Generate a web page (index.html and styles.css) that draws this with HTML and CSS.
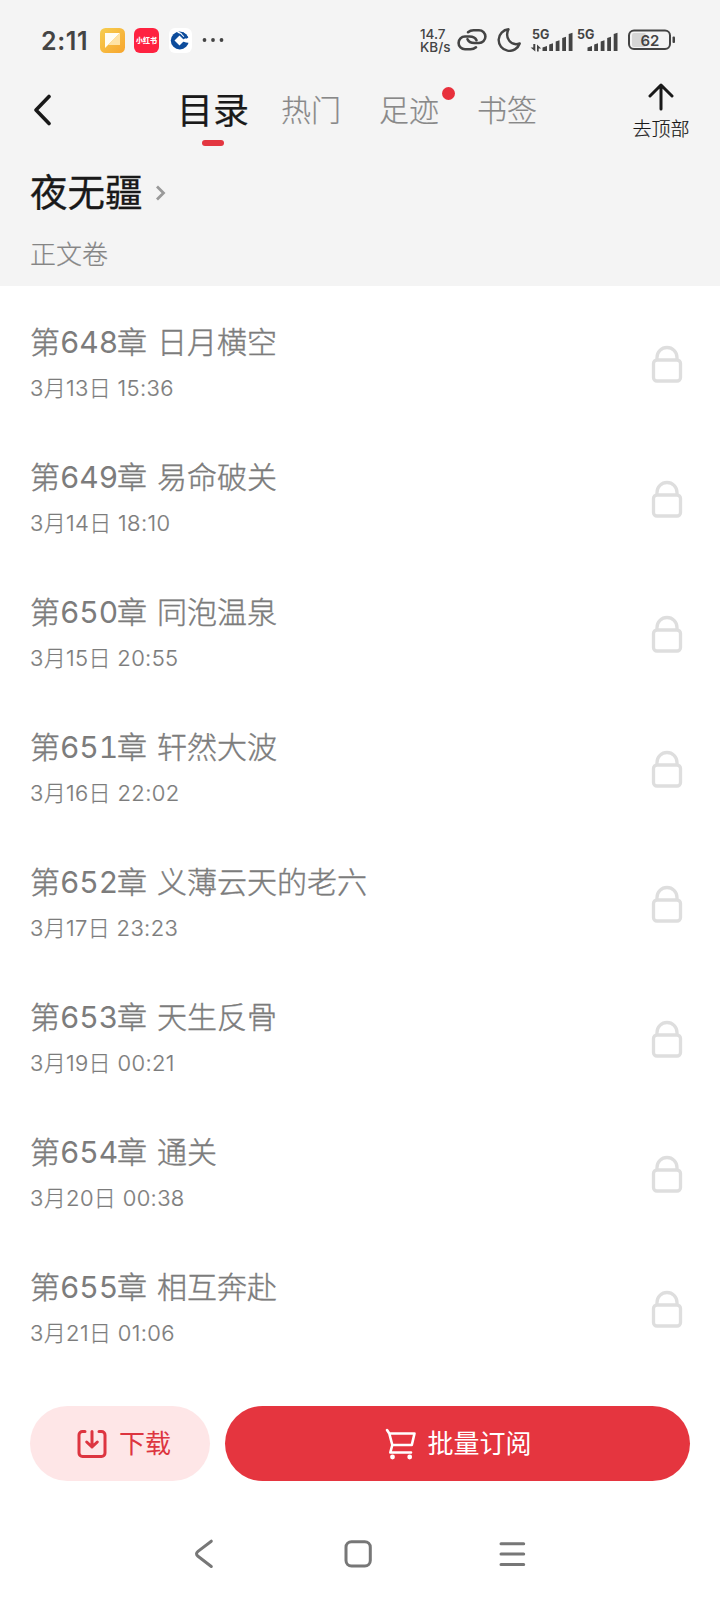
FILE: index.html
```html
<!DOCTYPE html>
<html lang="zh-CN">
<head>
<meta charset="utf-8">
<title>目录</title>
<link rel="stylesheet" href="styles.css">
</head>
<body>
<header class="top">
  <div class="status">
    <span class="clock">2:11</span>
    <svg class="app-icon" viewBox="0 0 25 25"><defs><linearGradient id="gold" x1="0" y1="0" x2="1" y2="1"><stop offset="0" stop-color="#f6ce50"/><stop offset="1" stop-color="#f7a52e"/></linearGradient></defs><rect width="25" height="25" rx="5.500" fill="url(#gold)"/><path d="M5 5h15L5 20z" fill="#fffdf3"/><path d="M20 5v12H8z" fill="#ffe3a4"/></svg>
    <span class="app-red">小红书</span>
    <svg class="app-icon" viewBox="0 0 25 25"><rect x="1" width="23" height="25" rx="6" fill="#fff"/><circle cx="11.800" cy="12.500" r="9" fill="#0d4c9c"/><path d="M11.500 7.500l5 5-5 5-5-5z" fill="#fff"/><path d="M15.500 11l7-2v6l-4.500-.5-3-1z" fill="#fff"/><path d="M9.500 4.200q3.500.5 6.500 4.500" stroke="#fff" stroke-width="1.200" fill="none"/><path d="M14.500 5l5 5" stroke="#0d4c9c" stroke-width="2.200"/></svg>
    <svg class="dots" viewBox="0 0 22 6"><g fill="#444"><circle cx="2.500" cy="3" r="1.900"/><circle cx="11" cy="3" r="1.900"/><circle cx="19.500" cy="3" r="1.900"/></g></svg>
    <span class="speed"><span>14.7</span><span>KB/s</span></span>
    <svg class="link-icon" viewBox="0 0 30 24" fill="none" stroke="#444" stroke-width="2.600" stroke-linecap="round"><path d="M19.500 12.200C18.500 9.800 16 8.500 12.500 8.500H8a6.400 6.400 0 0 0 0 12.800h5.500c2.500 0 4-.7 5.500-2"/><path d="M10.500 11.300c1 2.400 3.500 3.700 7 3.700H22a6.400 6.400 0 0 0 0-12.800h-5.500c-2.500 0-4 .7-5.500 2"/></svg>
    <svg class="moon" viewBox="0 0 24 24" fill="none" stroke="#444" stroke-width="2.400" stroke-linejoin="round"><path d="M11.500 1.300A10.800 10.800 0 1 0 22.700 15.500C13.500 18.500 7.500 9.500 11.500 1.300z"/></svg>
    <svg class="signal" viewBox="0 0 44 28"><text class="net" x="2" y="14">5G</text><g transform="translate(0 4)" fill="#444"><path d="M12.500 22v-3.500l4.500-1.500v5zM19.200 22v-6.500l3.800-1.300V22zM25.700 22V12.500l3.800-1.300V22zM32.200 22V9l3.800-1.300V22zM38.700 22V5l3.800-1.300V22z"/><path d="M3.300 15v3.500H.6l4.700 4V15zM7 22.500v-7l4.200 4H8.700v3z"/></g></svg>
    <svg class="signal signal-second" viewBox="0 0 44 28"><text class="net" x="2" y="14">5G</text><path transform="translate(0 4)" fill="#444" d="M12.500 22v-3.500l4.500-1.500v5zM19.200 22v-6.500l3.800-1.300V22zM25.700 22V12.500l3.800-1.300V22zM32.200 22V9l3.800-1.300V22zM38.700 22V5l3.800-1.300V22z"/></svg>
    <svg class="battery" viewBox="0 0 48 22"><rect x="4" y="4" width="14" height="14" rx="2" fill="#d6d6d6"/><rect x="1" y="1.500" width="41" height="18.500" rx="5" fill="none" stroke="#444" stroke-width="2"/><rect x="44.500" y="7.500" width="2.500" height="6.500" rx="1" fill="#444"/><text class="level" x="22" y="16.500" text-anchor="middle">62</text></svg>
  </div>
  <nav class="tabs">
    <svg class="back" viewBox="0 0 20 32"><path d="M16 2.500L3 16l13 13.500"/></svg>
    <span class="tab active">目录</span>
    <span class="tab">热门</span>
    <span class="tab notice">足迹</span>
    <span class="tab">书签</span>
    <div class="to-top"><svg viewBox="0 0 26 28"><path d="M13 26V2M2 13L13 2l11 11"/></svg><span>去顶部</span></div>
  </nav>
  <h1 class="book">夜无疆<svg viewBox="0 0 11 18"><path d="M2 2.500L8.500 9 2 15.500"/></svg></h1>
  <p class="volume">正文卷</p>
</header>
<svg class="defs"><symbol id="lock" viewBox="0 0 32 40"><path d="M6 15v-1.500a10 10 0 0 1 20 0V15"/><rect x="2.500" y="16" width="27" height="21" rx="3.500"/></symbol></svg>
<main class="list">
  <div class="row"><div><h2>第<b>648</b>章<i></i>日月横空</h2><p>3月13日 15:36</p></div><svg class="lock"><use href="#lock"/></svg></div>
  <div class="row"><div><h2>第<b>649</b>章<i></i>易命破关</h2><p>3月14日 18:10</p></div><svg class="lock"><use href="#lock"/></svg></div>
  <div class="row"><div><h2>第<b>650</b>章<i></i>同泡温泉</h2><p>3月15日 20:55</p></div><svg class="lock"><use href="#lock"/></svg></div>
  <div class="row"><div><h2>第<b>651</b>章<i></i>轩然大波</h2><p>3月16日 22:02</p></div><svg class="lock"><use href="#lock"/></svg></div>
  <div class="row"><div><h2>第<b>652</b>章<i></i>义薄云天的老六</h2><p>3月17日 23:23</p></div><svg class="lock"><use href="#lock"/></svg></div>
  <div class="row"><div><h2>第<b>653</b>章<i></i>天生反骨</h2><p>3月19日 00:21</p></div><svg class="lock"><use href="#lock"/></svg></div>
  <div class="row"><div><h2>第<b>654</b>章<i></i>通关</h2><p>3月20日 00:38</p></div><svg class="lock"><use href="#lock"/></svg></div>
  <div class="row"><div><h2>第<b>655</b>章<i></i>相互奔赴</h2><p>3月21日 01:06</p></div><svg class="lock"><use href="#lock"/></svg></div>
</main>
<footer class="actions">
  <div class="btn download"><svg viewBox="0 0 30 30"><path d="M8 2.500H5.500a3.500 3.500 0 0 0-3.500 3.500V24a3.500 3.500 0 0 0 3.500 3.500h19A3.500 3.500 0 0 0 28 24V6a3.500 3.500 0 0 0-3.500-3.500H22M15 2.500V18M9.700 13l5.300 5 5.300-5"/></svg><span>下载</span></div>
  <div class="btn subscribe"><svg viewBox="0 0 32 32"><path d="M2 2l2.300 3.500H29.500L26.800 17H7.300M4.300 5.500L7.300 17 5.300 24.500H26"/><g class="wheels"><circle cx="7.500" cy="29" r="2.400"/><circle cx="24.700" cy="29" r="2.400"/></g></svg><span>批量订阅</span></div>
</footer>
<div class="sysnav">
  <svg viewBox="0 0 30 30"><path d="M23.300 2.200L10 12.300q-3 2.500 0 5L23.300 27.500"/></svg>
  <svg viewBox="0 0 30 30"><rect x="3" y="2.800" width="24.300" height="24.300" rx="5.500"/></svg>
  <svg viewBox="0 0 30 30"><path d="M4 4.800h22.700M4 15h22.700M4 25.500h22.700"/></svg>
</div>
</body>
</html>
```
FILE: styles.css
```css
* { box-sizing: border-box; }
body { margin: 0; width: 720px; height: 1600px; overflow: hidden; background: #fff; font-family: "Noto Sans CJK SC", sans-serif; display: flex; flex-direction: column; }
h1, h2, p { margin: 0; font-weight: 400; }
svg { display: block; flex: none; }
.defs { width: 0; height: 0; position: absolute; }
.top { height: 286px; background: #f4f4f4; flex: none; }

.status { height: 80px; padding-left: 41px; display: flex; align-items: center; color: #444; }
.clock { width: 59px; font: 600 25px/30px Inter, sans-serif; letter-spacing: 0.600px; padding-top: 1px; }
.app-icon { width: 25px; height: 25px; }
.app-red { width: 25px; height: 25px; margin: 0 9px; border-radius: 6px; background: #fe2240; color: #fff; font-size: 7px; font-weight: 900; line-height: 24px; text-align: center; white-space: nowrap; }
.dots { width: 22px; height: 6px; margin-left: 9px; }
.speed { width: 36px; margin-left: 196px; padding-top: 2px; display: flex; flex-direction: column; font: 500 13.500px/13px Inter, sans-serif; white-space: nowrap; }
.link-icon { width: 30px; height: 24px; margin-left: 1px; }
.moon { width: 24px; height: 24px; margin-left: 10px; }
.signal { width: 44px; height: 28px; margin-left: 9px; margin-bottom: 2px; overflow: visible; }
.signal-second { margin-left: 1px; }
.net { font: 700 12.500px Inter, sans-serif; fill: #444; }
.battery { width: 48px; height: 22px; margin-left: 9px; }
.level { font: 600 15px Inter, sans-serif; fill: #444; }

.tabs { height: 70px; display: flex; padding-left: 33px; }
.back { width: 20px; height: 32px; margin: 14px 124px 0 0; fill: none; stroke: #191919; stroke-width: 3.600; stroke-linecap: round; stroke-linejoin: round; }
.tab { font-size: 30px; font-weight: 300; line-height: 57px; color: #888; margin-right: 38px; position: relative; height: 60px; white-space: nowrap; -webkit-text-stroke: 0.200px; }
.tab.active { font-size: 36px; line-height: 56px; font-weight: 400; color: #191919; margin-right: 32px; }
.active::after { content: ""; position: absolute; left: 25px; top: 60px; width: 22px; height: 6px; border-radius: 3px; background: #e33640; }
.notice::after { content: ""; position: absolute; left: 62.500px; top: 7px; width: 13px; height: 13px; border-radius: 50%; background: #e8303c; }
.to-top { width: 60px; margin: 3px 0 0 56px; display: flex; flex-direction: column; align-items: center; font-size: 19px; font-weight: 300; line-height: 28px; color: #191919; white-space: nowrap; -webkit-text-stroke: 0.200px; }
.to-top svg { width: 26px; height: 28px; margin-bottom: 3px; fill: none; stroke: #191919; stroke-width: 3; stroke-linecap: round; stroke-linejoin: round; }

.book { height: 80px; padding-left: 30px; display: flex; font-size: 37.500px; line-height: 80px; color: #191919; -webkit-text-stroke: 0.300px; }
.book svg { width: 11px; height: 18px; margin: 34px 0 0 12px; fill: none; stroke: #999; stroke-width: 2.800; }
.volume { padding-left: 30px; font-size: 26px; font-weight: 300; line-height: 46px; color: #858585; -webkit-text-stroke: 0.200px; }

.list { padding-top: 31px; flex: none; }
.row { height: 135px; padding: 0 37px 0 30px; display: flex; justify-content: space-between; color: #7c7c7c; }
.row h2 { font-size: 30px; font-weight: 300; line-height: 46px; white-space: nowrap; -webkit-text-stroke: 0.400px; }
.row b { display: inline-block; width: 57px; font-family: Inter, sans-serif; font-size: 30px; font-weight: 400; font-feature-settings: "tnum"; letter-spacing: -0.100px; -webkit-text-stroke: 0; }
.row i { display: inline-block; width: 10px; }
.row p { margin-top: 1px; font: 300 22px/44px Inter, "Noto Sans CJK SC", sans-serif; letter-spacing: 0.350px; white-space: nowrap; -webkit-text-stroke: 0.200px; }
.lock { width: 32px; height: 40px; margin-top: 27px; fill: none; stroke: #dedede; stroke-width: 3.300; }

.actions { margin-top: 9px; padding: 0 30px; display: flex; gap: 15px; flex: none; }
.btn { height: 75px; border-radius: 38px; display: flex; align-items: center; justify-content: center; font-size: 26px; white-space: nowrap; }
.btn span { padding-bottom: 4px; }
.btn svg { fill: none; stroke: currentColor; stroke-width: 3; stroke-linecap: round; stroke-linejoin: round; }
.download { width: 180px; padding-left: 8px; background: #fee6e7; color: #dd3540; gap: 12px; }
.download svg { width: 30px; height: 30px; }
.subscribe { flex: 1; padding-left: 2px; background: #e5353f; color: #fff; gap: 10px; }
.subscribe svg { width: 32px; height: 32px; stroke-width: 2.600; }
.wheels { fill: #fff; stroke: none; }

.sysnav { display: flex; gap: 124.500px; padding: 57.500px 0 0 188px; }
.sysnav svg { width: 30px; height: 30px; fill: none; stroke: #777; stroke-width: 3; stroke-linecap: round; }
```
